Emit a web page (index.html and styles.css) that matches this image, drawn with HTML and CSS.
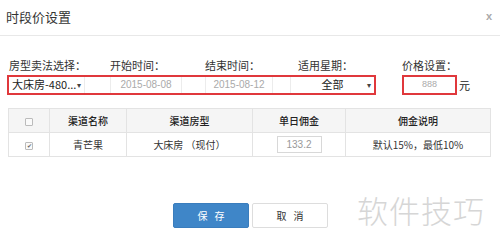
FILE: index.html
```html
<!DOCTYPE html>
<html lang="zh-CN">
<head>
    <meta charset="UTF-8">
    <meta name="viewport" content="width=device-width, initial-scale=1.0">
    <title>时段价设置</title>
    <link rel="stylesheet" href="styles.css">
</head>
<body>
    <div id="modal">
        <div class="modal-header">
            <span class="modal-title">时段价设置</span>
            <span class="modal-close">x</span>
        </div>
        <div class="modal-body">
            <div class="label-row">
                <span class="label label-room">房型卖法选择：</span>
                <span class="label label-start">开始时间：</span>
                <span class="label label-end">结束时间：</span>
                <span class="label label-week">适用星期：</span>
                <span class="label label-price">价格设置：</span>
            </div>
            <div class="control-row">
                <div class="red-box group-box">
                    <div class="ctrl select-room">大床房-480...<span class="caret">▾</span></div>
                    <div class="ctrl date date-start">2015-08-08</div>
                    <div class="ctrl date date-end">2015-08-12</div>
                    <div class="ctrl select-week">全部<span class="caret">▾</span></div>
                </div>
                <div class="red-box price-box">
                    <div class="ctrl price-input">888</div>
                </div>
                <span class="unit">元</span>
            </div>
            <table class="grid">
                <thead>
                    <tr>
                        <th class="col-check"><span class="checkbox"></span></th>
                        <th class="col-name">渠道名称</th>
                        <th class="col-type">渠道房型</th>
                        <th class="col-fee">单日佣金</th>
                        <th class="col-desc">佣金说明</th>
                    </tr>
                </thead>
                <tbody>
                    <tr>
                        <td><span class="checkbox checked">✔</span></td>
                        <td>青芒果</td>
                        <td>大床房 （现付）</td>
                        <td><span class="fee-input">133.2</span></td>
                        <td>默认15%，最低10%</td>
                    </tr>
                </tbody>
            </table>
            <div class="actions">
                <button class="btn btn-primary">保存</button>
                <button class="btn btn-default">取消</button>
            </div>
        </div>
        <div class="watermark">软件技巧</div>
    </div>
</body>
</html>
```

FILE: styles.css
```css
body {
    margin: 0;
    padding: 0;
    background: #fff;
    font-family: "Noto Sans CJK SC", "Liberation Sans", sans-serif;
    font-size: 12px;
    color: #333;
}
#modal {
    position: relative;
    width: 500px;
    height: 242px;
    overflow: hidden;
}
.modal-header {
    height: 35px;
    padding: 0 8px 0 6px;
    border-bottom: 1px solid #e8e8e8;
    display: flex;
    justify-content: space-between;
    align-items: center;
}
.modal-title {
    font-size: 13px;
    color: #333;
    margin-top: -3px;
}
.modal-close {
    font-family: "Liberation Sans", sans-serif;
    font-size: 11px;
    color: #aaa;
    font-weight: bold;
    margin-top: -4px;
}
.modal-body {
    padding: 22px 0 0 0;
}
.label-row {
    display: flex;
    height: 14px;
    line-height: 14px;
    font-size: 11px;
    color: #333;
}
.label { display: block; }
.label-room { margin-left: 9px; width: 101px; }
.label-start { width: 95px; }
.label-end { width: 93px; }
.label-week { width: 104px; }
.control-row {
    display: flex;
    align-items: center;
    margin-top: 3px;
}
.red-box {
    border: 2px solid #e0383c;
    height: 16px;
    display: flex;
    align-items: center;
}
.group-box {
    margin-left: 7px;
    width: 365px;
}
.ctrl {
    box-sizing: border-box;
    height: 16px;
    line-height: 15px;
    font-size: 11px;
    border-left: 1px solid #ececec;
    border-right: 1px solid #ececec;
}
.select-room {
    width: 76px;
    padding-left: 3px;
    color: #222;
    position: relative;
    border-left: none;
}
.caret {
    position: absolute;
    right: 3px;
    top: 0;
    font-size: 8px;
    color: #444;
}
.date {
    color: #aaa;
    font-family: "Liberation Sans", sans-serif;
    font-size: 10px;
    text-align: center;
}
.date-start { margin-left: 25px; width: 72px; }
.date-end { margin-left: 23px; width: 68px; }
.select-week {
    margin-left: 17px;
    width: 84px;
    text-align: center;
    position: relative;
    color: #222;
    border-right: none;
}
.price-box {
    margin-left: 26px;
    width: 51px;
}
.price-input {
    width: 100%;
    border: none;
    text-align: center;
    color: #aaa;
    font-family: "Liberation Sans", sans-serif;
    font-size: 9px;
}
.unit {
    margin-left: 2px;
    font-size: 11px;
    color: #222;
}
.grid {
    margin: 13px 0 0 8px;
    width: 483px;
    border-collapse: collapse;
    font-size: 10px;
}
.grid th, .grid td {
    border: 1px solid #e3e3e3;
    height: 23px;
    padding: 0;
    text-align: center;
    color: #333;
}
.grid th {
    background: #f5f5f5;
    font-weight: 500;
    color: #222;
}
.col-check { width: 40px; }
.col-name { width: 76px; }
.col-type { width: 125px; }
.col-fee { width: 92px; }
.checkbox {
    display: inline-block;
    box-sizing: border-box;
    width: 8px;
    height: 8px;
    border: 1px solid #bbb;
    border-radius: 1px;
    background: #fafafa;
    vertical-align: middle;
    font-size: 6px;
    line-height: 6px;
    color: #666;
}
.fee-input {
    display: inline-block;
    box-sizing: border-box;
    width: 45px;
    height: 17px;
    line-height: 15px;
    border: 1px solid #d8d8d8;
    color: #999;
    font-family: "Liberation Sans", sans-serif;
    font-size: 10px;
    vertical-align: middle;
}
.actions {
    display: flex;
    margin: 46px 0 0 173px;
    gap: 3px;
}
.btn {
    width: 76px;
    height: 25px;
    border-radius: 2px;
    font-family: "Noto Sans CJK SC", sans-serif;
    font-size: 10px;
    letter-spacing: 7px;
    text-indent: 7px;
    padding: 0;
    cursor: pointer;
}
.btn-primary {
    background: #3f86c8;
    border: 1px solid #3a7dbd;
    color: #fff;
}
.btn-default {
    background: #fff;
    border: 1px solid #ddd;
    color: #333;
}
.watermark {
    position: absolute;
    left: 357px;
    top: 187px;
    font-size: 31px;
    color: #d6d6d6;
    letter-spacing: 1px;
    font-weight: 300;
}
```
